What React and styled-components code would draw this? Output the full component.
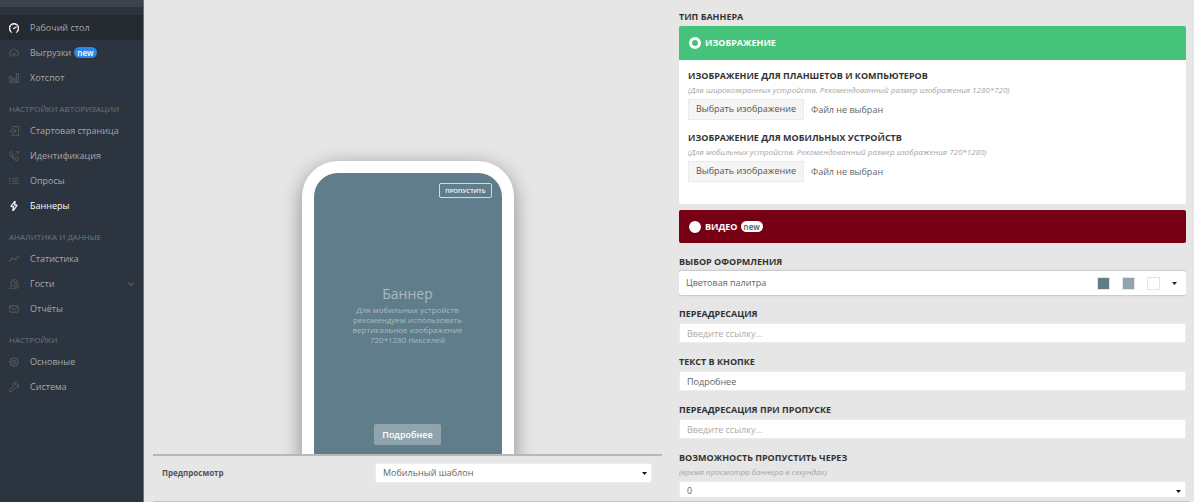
import { useState } from "react";
import styled, { createGlobalStyle } from "styled-components";
import {
  SlCloudUpload,
  SlChart,
  SlLogin,
  SlCallOut,
  SlList,
  SlEnergy,
  SlGraph,
  SlPeople,
  SlEnvolope,
  SlSettings,
  SlWrench,
  SlSpeedometer,
  SlArrowDown,
} from "react-icons/sl";

const GlobalStyle = createGlobalStyle`
  * {
    box-sizing: border-box;
  }
  body {
    margin: 0;
    background: #e6e6e6;
    color: #646464;
    font-family: "Open Sans", "Noto Sans", sans-serif;
    font-size: 9px;
    line-height: 16px;
  }
  button,
  input,
  select {
    font: inherit;
    color: inherit;
  }
`;

const Page = styled.div`
  display: flex;
  height: 100vh;
  overflow: hidden;
`;

const Sidebar = styled.aside`
  flex: 0 0 144px;
  min-width: 0;
  background: #2c343f;
  border-right: 1px solid #6b7078;
`;

const SidebarTop = styled.div`
  height: 7px;
  margin-bottom: 8px;
  background: #3e444e;
`;

const NavTitle = styled.h2`
  margin: 0;
  padding: 11px 9px 1px;
  color: #6f767e;
  font-size: 8px;
  font-weight: 500;
  line-height: 16px;
  text-transform: uppercase;
  white-space: nowrap;
`;

const NavItem = styled.a`
  display: flex;
  align-items: center;
  height: 25px;
  padding: 0 9px;
  background: ${({ $current }) => ($current ? "#242a30" : "transparent")};
  color: ${({ $active }) => ($active ? "#ffffff" : "#a4a8ad")};
  font-weight: ${({ $active }) => ($active ? "500" : "400")};
  text-decoration: none;
  white-space: nowrap;

  > svg:first-child {
    width: 10px;
    height: 10px;
    margin-right: 11px;
    stroke: currentColor;
    stroke-width: ${({ $active, $current }) =>
      $active || $current ? "60px" : "30px"};
    color: ${({ $active, $current }) =>
      $active || $current ? "#ffffff" : "#555c65"};
  }
`;

const Arrow = styled(SlArrowDown)`
  width: 6px;
  height: 6px;
  margin-left: auto;
`;

const Badge = styled.span`
  margin-left: 3px;
  padding: 0 3px;
  border-radius: 6px;
  background: ${({ $light }) => ($light ? "#ffffff" : "#2f86e0")};
  color: ${({ $light }) => ($light ? "#555555" : "#ffffff")};
  font-size: 8px;
  font-weight: 600;
  line-height: 11px;
  text-transform: none;
`;

const Main = styled.main`
  display: flex;
  flex: 1;
  gap: 17px;
  min-width: 0;
  margin: 0 5px 0 9px;
  padding-right: 3px;
  border-bottom: 1px solid #c4c4c4;
`;

const Preview = styled.section`
  display: flex;
  flex: 1 1 2px;
  flex-direction: column;
  min-width: 0;
`;

const Stage = styled.div`
  display: flex;
  flex: 1;
  justify-content: center;
  min-height: 0;
  padding-top: 161px;
  overflow: hidden;
  border-bottom: 2px solid #b8b8b8;
`;

const Phone = styled.div`
  display: flex;
  flex: 0 0 212px;
  flex-direction: column;
  align-items: center;
  height: 420px;
  padding: 10px 10px;
  border: 12px solid #ffffff;
  border-radius: 36px;
  background: #607d8b;
  box-shadow: 0 5px 20px rgba(0, 0, 0, 0.4);
  color: #a9bac2;
  text-align: center;
`;

const SkipButton = styled.button`
  align-self: flex-end;
  height: 15px;
  padding: 0 5px;
  border: 1px solid #d2dbdf;
  border-radius: 2px;
  background: transparent;
  color: #ffffff;
  font-size: 6px;
  font-weight: 600;
  line-height: 12px;
  text-transform: uppercase;
`;

const BannerTitle = styled.h1`
  margin: 86px 0 1px;
  font-size: 14px;
  font-weight: 400;
  line-height: 20px;
`;

const BannerText = styled.p`
  width: 124px;
  margin: 0;
  font-size: 8px;
  line-height: 10px;
`;

const MoreButton = styled.button`
  height: 21px;
  margin-top: 79px;
  padding: 0 8px;
  border: 0;
  border-radius: 2px;
  background: #90a4ae;
  color: #ffffff;
  font-weight: 600;
`;

const PreviewBar = styled.div`
  display: flex;
  height: 45px;
  padding: 7px 10px 0 9px;
`;

const PreviewLabel = styled.label`
  flex: 0 0 213px;
  color: #545454;
  font-size: 8px;
  font-weight: 700;
  line-height: 20px;
`;

const Form = styled.form`
  flex: 1 1 0;
  min-width: 0;
  margin-bottom: 4px;
  padding-top: 9px;
  overflow: hidden;
`;

const Label = styled.label`
  display: block;
  margin-bottom: 1px;
  color: #333333;
  font-weight: 700;
  text-transform: uppercase;
`;

const Hint = styled.p`
  margin: -2px 0 2px;
  color: #a5a5a5;
  font-size: 8px;
  font-style: italic;
  line-height: 14px;
`;

const Field = styled.div`
  margin-top: 11px;
`;

const TypeHeader = styled.label`
  display: flex;
  align-items: center;
  height: ${({ $open }) => ($open ? "34px" : "33px")};
  padding: 0 10px;
  border-radius: ${({ $open }) => ($open ? "2px 2px 0 0" : "2px")};
  background: ${({ $open }) => ($open ? "#46c37b" : "#780014")};
  color: #ffffff;
  font-weight: 700;
`;

const Radio = styled.input`
  width: 12px;
  height: 12px;
  margin: 0 4px 0 0;
  border: ${({ checked }) => (checked ? "3px" : "6px")} solid #ffffff;
  border-radius: 50%;
  appearance: none;
`;

const TypeBody = styled.div`
  margin-bottom: 6px;
  padding: 8px 9px 22px;
  border-radius: 0 0 2px 2px;
  background: #ffffff;
`;

const Upload = styled.div`
  & + & {
    margin-top: 10px;
  }
`;

const FileRow = styled.div`
  display: flex;
  align-items: center;
  gap: 7px;
`;

const FileInput = styled.input`
  width: 1px;
  height: 1px;
  margin-right: -8px;
  opacity: 0;
`;

const FileButton = styled.label`
  padding: 0 7px 2px;
  border: 1px solid #eaeaea;
  background: #f5f5f5;
  color: #545454;
  font-weight: 500;
  line-height: 17px;
`;

const TextInput = styled.input`
  display: block;
  width: 100%;
  height: 20px;
  padding: 0 7px;
  border: 1px solid #ececec;
  background: #ffffff;
  outline: 0;

  &::placeholder {
    color: #aaaaaa;
    opacity: 1;
  }
`;

const SelectWrap = styled.div`
  display: flex;
  flex: 1;
  align-items: center;
  height: 20px;
  background: #ffffff;

  svg {
    flex: none;
    margin: 0 5px 0 -10px;
    color: #111111;
    pointer-events: none;
  }
`;

const Select = styled.select`
  flex: 1;
  height: 20px;
  padding: 0 7px;
  border: 1px solid #ececec;
  background: transparent;
  appearance: none;
`;

const PaletteButton = styled.button`
  display: flex;
  align-items: center;
  width: 100%;
  height: 24px;
  padding: 0 9px 0 7px;
  border: 0;
  border-radius: 2px;
  background: #ffffff;
  box-shadow: 0 0 2px rgba(0, 0, 0, 0.4);
  color: #646464;
  text-align: left;

  svg {
    color: #222222;
  }
`;

const PaletteName = styled.span`
  flex: 1;
`;

const Swatch = styled.span`
  width: 13px;
  height: 13px;
  margin-right: 12px;
  border: 1px solid #e4e4e4;
  background: ${({ $color }) => $color};
`;

const Caret = () => (
  <svg width="5" height="3" viewBox="0 0 5 3" aria-hidden="true">
    <path d="M0 0h5L2.5 3z" fill="currentColor" />
  </svg>
);

const menu = [
  {
    items: [
      { icon: SlSpeedometer, text: "Рабочий стол", current: true },
      { icon: SlCloudUpload, text: "Выгрузки", isNew: true },
      { icon: SlChart, text: "Хотспот" },
    ],
  },
  {
    title: "Настройки авторизации",
    items: [
      { icon: SlLogin, text: "Стартовая страница" },
      { icon: SlCallOut, text: "Идентификация" },
      { icon: SlList, text: "Опросы" },
      { icon: SlEnergy, text: "Баннеры", active: true },
    ],
  },
  {
    title: "Аналитика и данные",
    items: [
      { icon: SlGraph, text: "Статистика" },
      { icon: SlPeople, text: "Гости", arrow: true },
      { icon: SlEnvolope, text: "Отчёты" },
    ],
  },
  {
    title: "Настройки",
    items: [
      { icon: SlSettings, text: "Основные" },
      { icon: SlWrench, text: "Система" },
    ],
  },
];

const uploads = [
  {
    id: "desktop",
    title: "Изображение для планшетов и компьютеров",
    hint: "(Для широкоэкранных устройств. Рекомендованный размер изображения 1280*720)",
  },
  {
    id: "mobile",
    title: "Изображение для мобильных устройств",
    hint: "(Для мобильных устройств. Рекомендованный размер изображения 720*1280)",
  },
];

const App = () => {
  const [type, setType] = useState("image");
  const [buttonText, setButtonText] = useState("Подробнее");

  return (
    <Page>
      <GlobalStyle />
      <Sidebar>
        <SidebarTop />
        <nav>
          {menu.map(({ title, items }) => (
            <div key={items[0].text}>
              {title && <NavTitle>{title}</NavTitle>}
              {items.map(({ icon: Icon, text, current, active, isNew, arrow }) => (
                <NavItem href="#" key={text} $current={current} $active={active}>
                  <Icon />
                  {text}
                  {isNew && <Badge>new</Badge>}
                  {arrow && <Arrow />}
                </NavItem>
              ))}
            </div>
          ))}
        </nav>
      </Sidebar>
      <Main>
        <Preview>
          <Stage>
            <Phone>
              <SkipButton type="button">Пропустить</SkipButton>
              <BannerTitle>Баннер</BannerTitle>
              <BannerText>
                Для мобильных устройств рекомендуем использовать вертикальное
                изображение 720*1280 пикселей
              </BannerText>
              <MoreButton type="button">{buttonText}</MoreButton>
            </Phone>
          </Stage>
          <PreviewBar>
            <PreviewLabel htmlFor="template">Предпросмотр</PreviewLabel>
            <SelectWrap>
              <Select id="template">
                <option>Мобильный шаблон</option>
              </Select>
              <Caret />
            </SelectWrap>
          </PreviewBar>
        </Preview>
        <Form>
          <Label as="div">Тип баннера</Label>
          <TypeHeader $open>
            <Radio
              type="radio"
              name="type"
              checked={type === "image"}
              onChange={() => setType("image")}
            />
            ИЗОБРАЖЕНИЕ
          </TypeHeader>
          <TypeBody>
            {uploads.map(({ id, title, hint }) => (
              <Upload key={id}>
                <Label as="div">{title}</Label>
                <Hint>{hint}</Hint>
                <FileRow>
                  <FileInput type="file" id={id} />
                  <FileButton htmlFor={id}>Выбрать изображение</FileButton>
                  <span>Файл не выбран</span>
                </FileRow>
              </Upload>
            ))}
          </TypeBody>
          <TypeHeader>
            <Radio
              type="radio"
              name="type"
              checked={type === "video"}
              onChange={() => setType("video")}
            />
            ВИДЕО
            <Badge $light>new</Badge>
          </TypeHeader>
          <Field>
            <Label htmlFor="palette">Выбор оформления</Label>
            <PaletteButton type="button" id="palette">
              <PaletteName>Цветовая палитра</PaletteName>
              <Swatch $color="#607d8b" />
              <Swatch $color="#90a4ae" />
              <Swatch $color="#ffffff" />
              <Caret />
            </PaletteButton>
          </Field>
          <Field>
            <Label htmlFor="link">Переадресация</Label>
            <TextInput id="link" placeholder="Введите ссылку..." />
          </Field>
          <Field>
            <Label htmlFor="text">Текст в кнопке</Label>
            <TextInput
              id="text"
              value={buttonText}
              onChange={(e) => setButtonText(e.target.value)}
            />
          </Field>
          <Field>
            <Label htmlFor="skip">Переадресация при пропуске</Label>
            <TextInput id="skip" placeholder="Введите ссылку..." />
          </Field>
          <Field>
            <Label htmlFor="delay">Возможность пропустить через</Label>
            <Hint>(время просмотра баннера в секундах)</Hint>
            <SelectWrap>
              <Select id="delay">
                <option>0</option>
              </Select>
              <Caret />
            </SelectWrap>
          </Field>
        </Form>
      </Main>
    </Page>
  );
};

export default App;
